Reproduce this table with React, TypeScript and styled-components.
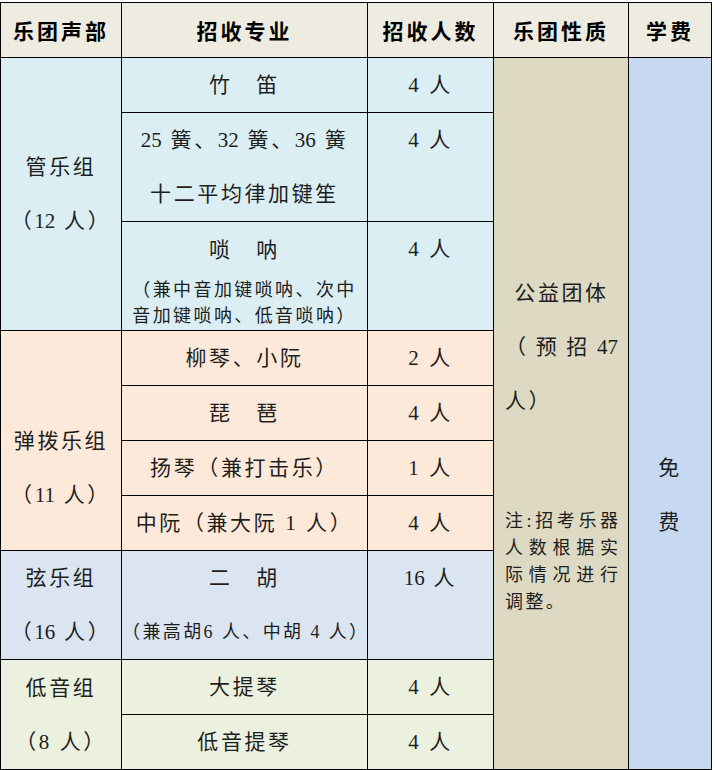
import React from 'react';
import styled, { createGlobalStyle } from 'styled-components';

const GlobalStyle = createGlobalStyle`
  html, body {
    margin: 0;
    padding: 0;
    background: #ffffff;
  }
  body {
    font-family: "Liberation Serif", "Noto Sans CJK SC", serif;
    color: #1e1e1e;
  }
`;

const Page = styled.div`
  width: 715px;
  padding-top: 2px;
`;

const Table = styled.table`
  border-collapse: collapse;
  table-layout: fixed;
  width: 711px;
`;

const Col = styled.col<{ $w: number }>`
  width: ${p => p.$w}px;
`;

const Row = styled.tr<{ $h: number }>`
  height: ${p => p.$h}px;
`;

const Head = styled.th`
  border: 1.5px solid #000;
  background: #eeece1;
  padding: 0;
  font-family: "Noto Sans CJK SC", serif;
  font-size: 21px;
  font-weight: 700;
  letter-spacing: 3px;
  color: #000;
  text-align: center;
  vertical-align: middle;
`;

const Cell = styled.td<{ $bg: string; $top?: number; $left?: boolean }>`
  border: 1.5px solid #000;
  background: ${p => p.$bg};
  padding: 0;
  padding-top: ${p => p.$top ?? 0}px;
  padding-left: ${p => (p.$left ? 11 : 0)}px;
  padding-right: ${p => (p.$left ? 10 : 0)}px;
  vertical-align: ${p => (p.$top !== undefined ? 'top' : 'middle')};
  text-align: ${p => (p.$left ? 'left' : 'center')};
`;

const Line = styled.div<{ $lh?: number; $small?: boolean }>`
  font-size: ${p => (p.$small ? 18 : 21)}px;
  line-height: ${p => p.$lh ?? 54}px;
  letter-spacing: ${p => (p.$small ? 2.4 : 2.6)}px;
  white-space: nowrap;
`;

const Num = styled.span`
  letter-spacing: 0;
  margin-right: 1px;
`;

const Spread = styled.div<{ $lh?: number; $small?: boolean }>`
  display: flex;
  justify-content: space-between;
  font-size: ${p => (p.$small ? 18 : 21)}px;
  line-height: ${p => p.$lh ?? 54}px;
  white-space: nowrap;
`;

const Centered = styled(Line)`
  text-align: center;
`;

const Gap = styled.div<{ $h: number }>`
  height: ${p => p.$h}px;
`;

const C = {
  wind: '#daeef3',
  pluck: '#fde9d9',
  strings: '#dbe5f1',
  bass: '#ebf1de',
  nature: '#ddd9c3',
  fee: '#c6d9f1',
};

const spread = (chars: string[]) => chars.map((c, i) => <span key={i}>{c}</span>);

export default function App() {
  return (
    <Page>
      <GlobalStyle />
      <Table>
        <colgroup>
          <Col $w={121} />
          <Col $w={246} />
          <Col $w={126} />
          <Col $w={135} />
          <Col $w={83} />
        </colgroup>
        <thead>
          <Row $h={55}>
            <Head>乐团声部</Head>
            <Head>招收专业</Head>
            <Head>招收人数</Head>
            <Head>乐团性质</Head>
            <Head>学费</Head>
          </Row>
        </thead>
        <tbody>
          {/* 管乐组 */}
          <Row $h={55}>
            <Cell $bg={C.wind} rowSpan={3}>
              <Line>管乐组</Line>
              <Line>（<Num>12</Num> 人）</Line>
            </Cell>
            <Cell $bg={C.wind}><Line>竹　笛</Line></Cell>
            <Cell $bg={C.wind}><Line>4 人</Line></Cell>
            <Cell $bg={C.nature} rowSpan={10} $top={208} $left>
              <Centered>公益团体</Centered>
              <Spread>{spread(['（', '预', '招', '47'])}</Spread>
              <Line>人）</Line>
              <Gap $h={80} />
              <Spread $small $lh={27}>{spread(['注', ':', '招', '考', '乐', '器'])}</Spread>
              <Spread $small $lh={27}>{spread(['人', '数', '根', '据', '实'])}</Spread>
              <Spread $small $lh={27}>{spread(['际', '情', '况', '进', '行'])}</Spread>
              <Line $small $lh={27}>调整。</Line>
            </Cell>
            <Cell $bg={C.fee} rowSpan={10} $top={383}>
              <Line>免</Line>
              <Line>费</Line>
            </Cell>
          </Row>
          <Row $h={109}>
            <Cell $bg={C.wind}>
              <Line><Num>25</Num> 簧、<Num>32</Num> 簧、<Num>36</Num> 簧</Line>
              <Line>十二平均律加键笙</Line>
            </Cell>
            <Cell $bg={C.wind} $top={0}><Line>4 人</Line></Cell>
          </Row>
          <Row $h={109}>
            <Cell $bg={C.wind}>
              <Line>唢　呐</Line>
              <Line $small $lh={26}>（兼中音加键唢呐、次中</Line>
              <Line $small $lh={26}>音加键唢呐、低音唢呐）</Line>
            </Cell>
            <Cell $bg={C.wind} $top={0}><Line>4 人</Line></Cell>
          </Row>

          {/* 弹拨乐组 */}
          <Row $h={55}>
            <Cell $bg={C.pluck} rowSpan={4} $top={83}>
              <Line>弹拨乐组</Line>
              <Line>（<Num>11</Num> 人）</Line>
            </Cell>
            <Cell $bg={C.pluck}><Line>柳琴、小阮</Line></Cell>
            <Cell $bg={C.pluck}><Line>2 人</Line></Cell>
          </Row>
          <Row $h={55}>
            <Cell $bg={C.pluck}><Line>琵　琶</Line></Cell>
            <Cell $bg={C.pluck}><Line>4 人</Line></Cell>
          </Row>
          <Row $h={55}>
            <Cell $bg={C.pluck}><Line>扬琴（兼打击乐）</Line></Cell>
            <Cell $bg={C.pluck}><Line>1 人</Line></Cell>
          </Row>
          <Row $h={55}>
            <Cell $bg={C.pluck}><Line>中阮（兼大阮 1 人）</Line></Cell>
            <Cell $bg={C.pluck}><Line>4 人</Line></Cell>
          </Row>

          {/* 弦乐组 */}
          <Row $h={109}>
            <Cell $bg={C.strings}>
              <Line>弦乐组</Line>
              <Line>（<Num>16</Num> 人）</Line>
            </Cell>
            <Cell $bg={C.strings}>
              <Line>二　胡</Line>
              <Line $small>（兼高胡6 人、中胡 4 人）</Line>
            </Cell>
            <Cell $bg={C.strings} $top={0}><Line><Num>16</Num> 人</Line></Cell>
          </Row>

          {/* 低音组 */}
          <Row $h={53}>
            <Cell $bg={C.bass} rowSpan={2}>
              <Line>低音组</Line>
              <Line>（8 人）</Line>
            </Cell>
            <Cell $bg={C.bass}><Line>大提琴</Line></Cell>
            <Cell $bg={C.bass}><Line>4 人</Line></Cell>
          </Row>
          <Row $h={53}>
            <Cell $bg={C.bass}><Line>低音提琴</Line></Cell>
            <Cell $bg={C.bass}><Line>4 人</Line></Cell>
          </Row>
        </tbody>
      </Table>
    </Page>
  );
}
